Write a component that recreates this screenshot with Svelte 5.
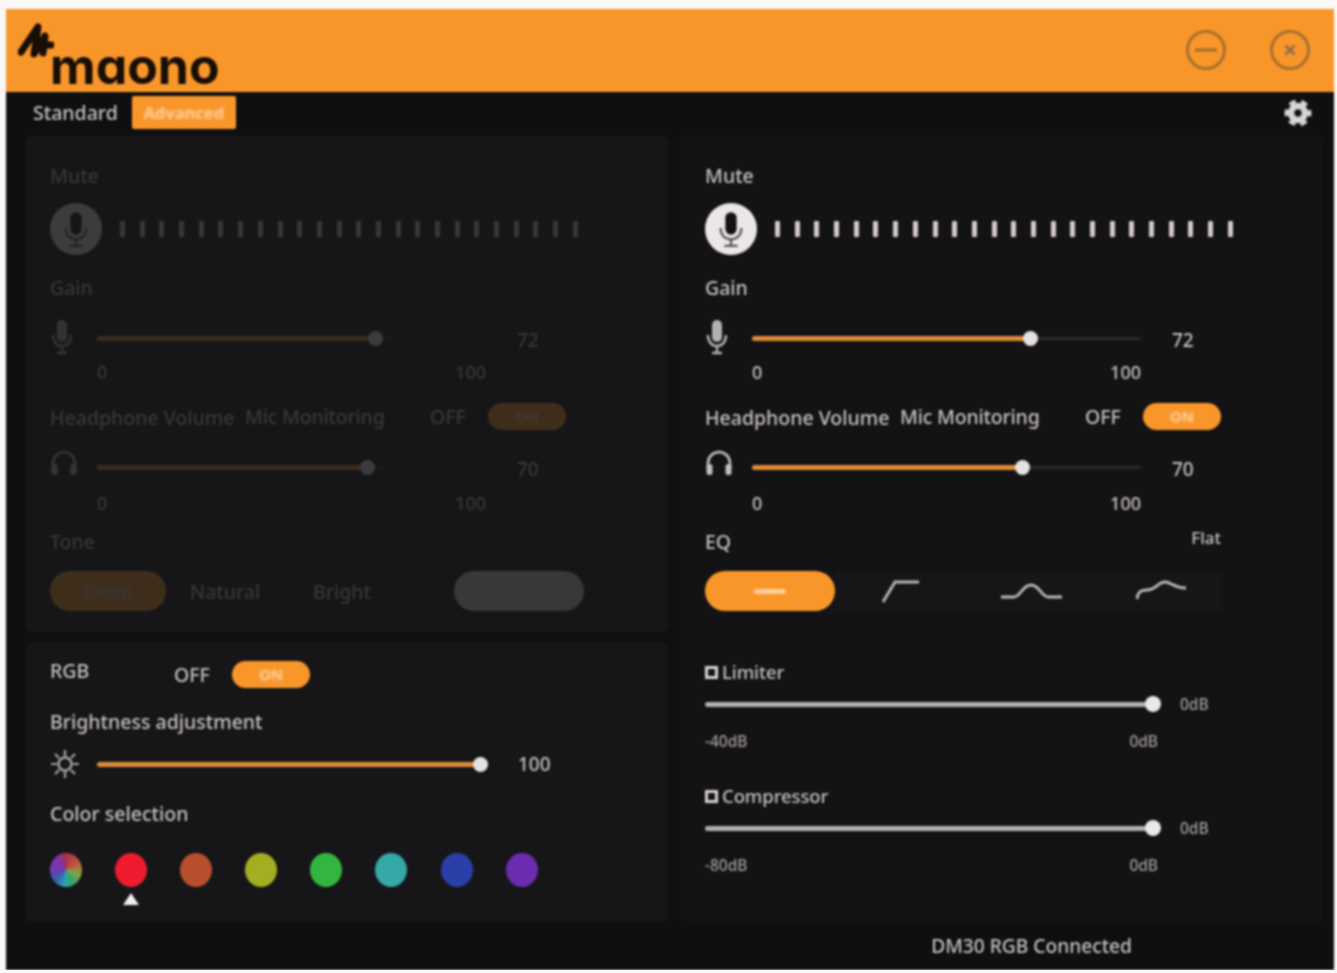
<script lang="ts">
  const ticks = Array.from({ length: 24 });
  const swatches = ['#ee1c2e', '#b84f2c', '#a3ae22', '#33b63f', '#35a8a8', '#2a3fa8', '#6d2bb0'];
</script>

{#snippet micIcon(capsule: string, arc: string)}
  <svg viewBox="0 0 32 40" class="mic-svg" aria-hidden="true">
    <rect x="10" y="2" width="12" height="24" rx="6" fill={capsule} />
    <path d="M5 19c0 8 5 12 11 12s11-4 11-12" fill="none" stroke={arc} stroke-width="2.4" />
    <path d="M16 31v6M9 38h14" fill="none" stroke={arc} stroke-width="2.4" />
  </svg>
{/snippet}

{#snippet slider(pct: number, value: string)}
  <div class="track">
    <div class="fill" style="width: {pct}%"></div>
    <div class="thumb" style="left: {pct}%"></div>
  </div>
  <span class="value">{value}</span>
{/snippet}

{#snippet toggle()}
  <span class="off">OFF</span>
  <span class="pill-toggle"><b>ON</b></span>
{/snippet}

{#snippet micControls()}
  <div class="label first">Mute</div>
  <div class="mute-row">
    <div class="mute-btn">{@render micIcon('#111', '#555')}</div>
    <div class="ticks">
      {#each ticks as _}<i></i>{/each}
    </div>
  </div>

  <div class="label gain">Gain</div>
  <div class="slider-row s1">
    <svg viewBox="0 0 24 36" class="gain-icon" aria-hidden="true">
      <rect x="7" y="1" width="10" height="22" rx="5" fill="#b5b0b0" />
      <path d="M3 16c0 7 4 11 9 11s9-4 9-11" fill="none" stroke="#b5b0b0" stroke-width="2.4" />
      <path d="M12 27v6M7 34h10" stroke="#b5b0b0" stroke-width="2.4" />
    </svg>
    {@render slider(71.5, '72')}
  </div>
  <div class="scale s1"><span>0</span><span>100</span></div>

  <div class="monitor-row">
    <span class="label">Headphone Volume</span>
    <span class="label mic-mon">Mic Monitoring</span>
    {@render toggle()}
  </div>
  <div class="slider-row s2">
    <svg viewBox="0 0 28 26" class="phones" aria-hidden="true">
      <path d="M3 19v-6a11 11 0 0 1 22 0v6" fill="none" stroke="#c4bebe" stroke-width="2.6" />
      <rect x="1.5" y="14" width="6" height="11" rx="2.5" fill="#c4bebe" />
      <rect x="20.5" y="14" width="6" height="11" rx="2.5" fill="#c4bebe" />
    </svg>
    {@render slider(69.5, '70')}
  </div>
  <div class="scale s2"><span>0</span><span>100</span></div>
{/snippet}

{#snippet dbSlider(name: string, min: string)}
  <div class="check-label">
    <span class="box"></span>
    <span class="label">{name}</span>
  </div>
  <div class="db-row">
    <div class="db-track"><div class="db-thumb"></div></div>
    <span class="db-val">0dB</span>
  </div>
  <div class="db-scale"><span>{min}</span><span>0dB</span></div>
{/snippet}

<div class="window">
  <header class="titlebar">
    <div class="logo">
      <svg viewBox="0 0 36 38" class="mark" aria-hidden="true">
        <path d="M3 31 20 6l-4 27L27 15l-2 17M26 24h7" fill="none" stroke="#170e05" stroke-width="7" stroke-linecap="round" stroke-linejoin="round" />
      </svg>
      <span class="wordmark">maono</span>
    </div>
    <div class="win-btns">
      <svg viewBox="0 0 42 42" class="win-btn" aria-hidden="true">
        <circle cx="21" cy="21" r="18.5" fill="none" stroke="#a87030" stroke-width="3" />
        <path d="M10 21h22" stroke="#a87030" stroke-width="3.4" />
      </svg>
      <svg viewBox="0 0 42 42" class="win-btn" aria-hidden="true">
        <circle cx="21" cy="21" r="18.5" fill="none" stroke="#a87030" stroke-width="3" />
        <path d="M16.5 16.5l9 9M25.5 16.5l-9 9" stroke="#94704a" stroke-width="3" />
      </svg>
    </div>
  </header>

  <nav class="tabs">
    <span class="tab">Standard</span>
    <span class="tab active"><b>Advanced</b></span>
    <svg viewBox="0 0 26 26" class="gear" aria-hidden="true">
      <circle cx="13" cy="13" r="9.500" fill="#d8d4d4" />
      <circle cx="13" cy="13" r="10.500" fill="none" stroke="#d8d4d4" stroke-width="4" stroke-dasharray="6 5" stroke-dashoffset="3" />
      <circle cx="13" cy="13" r="3.400" fill="#111113" />
    </svg>
  </nav>

  <main class="columns">
    <div class="col">
      <section class="panel top">
        <div class="dim">
          {@render micControls()}
          <div class="label tone">Tone</div>
          <div class="tone-row">
            <span class="tone-pill">Deep</span>
            <span class="tone-opt natural">Natural</span>
            <span class="tone-opt bright">Bright</span>
            <span class="grey-pill"></span>
          </div>
        </div>
      </section>

      <section class="panel rgb">
        <div class="rgb-row">
          <span class="label rgb-label">RGB</span>
          {@render toggle()}
        </div>
        <div class="label bright-label">Brightness adjustment</div>
        <div class="slider-row s3">
          <svg viewBox="0 0 30 30" class="sun" aria-hidden="true">
            <circle cx="15" cy="15" r="6.500" fill="none" stroke="#aaa5a5" stroke-width="2.400" />
            <path d="M15 1v6M15 23v6M1 15h6M23 15h6M5 5l4 4M21 21l4 4M25 5l-4 4M9 21l-4 4" stroke="#aaa5a5" stroke-width="2.200" />
          </svg>
          {@render slider(100, '100')}
        </div>
        <div class="label color-label">Color selection</div>
        <div class="swatches">
          <span class="swatch wheel"></span>
          {#each swatches as color}
            <span class="swatch" style="background: {color}"></span>
          {/each}
        </div>
        <div class="pointer"></div>
      </section>
    </div>

    <section class="panel right">
      {@render micControls()}
      <div class="eq-head">
        <span class="label">EQ</span>
        <span class="flat">Flat</span>
      </div>
      <div class="eq-row">
        <span class="eq-pill"><i></i></span>
        <div class="eq-strip">
          <svg viewBox="0 0 39 26" class="curve c1" aria-hidden="true">
            <path d="M2 24 14 4h24" />
          </svg>
          <svg viewBox="0 0 63 20" class="curve c2" aria-hidden="true">
            <path d="M1 16h12c8 0 9-12 18-12s10 12 18 12h13" />
          </svg>
          <svg viewBox="0 0 53 22" class="curve c3" aria-hidden="true">
            <path d="M2 20c1-8 5-9 10-9 9 0 11-8 18-8 6 0 9 6 21 6" />
          </svg>
        </div>
      </div>
      <div class="limiter">{@render dbSlider('Limiter', '-40dB')}</div>
      <div class="compressor">{@render dbSlider('Compressor', '-80dB')}</div>
    </section>
  </main>

  <footer class="status">DM30 RGB Connected</footer>
</div>

<style>
  :global(body) {
    margin: 0;
    background: #f8f8f8;
    font-family: "Noto Sans", "Open Sans", sans-serif;
    font-weight: 500;
  }

  .window {
    width: 1328px;
    height: 961px;
    margin: 9px 0 0 6px;
    background: #0f0f11;
    color: #c9c0c1;
    display: flex;
    flex-direction: column;
    filter: blur(0.9px);
    overflow: hidden;
  }

  .titlebar {
    height: 83px;
    flex: none;
    background: #f9962a;
    display: flex;
    justify-content: space-between;
    box-sizing: border-box;
    padding: 0 23px 0 12px;
  }

  .logo {
    display: flex;
    align-items: flex-start;
  }

  .mark {
    width: 36px;
    height: 38px;
    margin-top: 12px;
    flex: none;
  }

  .wordmark {
    font-family: Inter, sans-serif;
    font-feature-settings: "cv11";
    font-weight: 700;
    font-size: 50px;
    line-height: 50px;
    color: #170e05;
    margin: 32px 0 0 -4px;
  }

  .win-btns {
    display: flex;
    gap: 42px;
    margin-top: 20px;
  }

  .win-btn {
    width: 42px;
    height: 42px;
  }

  .tabs {
    height: 44px;
    flex: none;
    display: flex;
    align-items: flex-start;
    box-sizing: border-box;
    padding: 4px 22px 0 27px;
    font-size: 19.500px;
  }

  .tab {
    height: 33px;
    line-height: 33px;
  }

  .tab.active {
    width: 104px;
    margin-left: 14px;
    text-align: center;
    background: #f9962a;
    color: #ffd3a0;
    font-size: 16.500px;
    border-radius: 2px;
  }

  .tab.active b {
    display: block;
    font-weight: 700;
    filter: blur(1.200px);
  }

  .gear {
    width: 28px;
    height: 28px;
    margin: 3px 0 0 auto;
  }

  .columns {
    flex: none;
    height: 786px;
    display: flex;
    gap: 12px;
    padding-left: 20px;
  }

  .col {
    display: flex;
    flex-direction: column;
    gap: 10px;
  }

  .panel {
    width: 642px;
    box-sizing: border-box;
    background: #161618;
    padding-left: 24px;
    border-radius: 6px;
  }

  .panel.top {
    height: 496px;
  }

  .panel.rgb {
    height: 280px;
  }

  .panel.right {
    height: 786px;
    padding-left: 25px;
    background: #131315;
  }

  .dim {
    opacity: 0.18;
  }

  .label {
    height: 24px;
    line-height: 24px;
    font-size: 19.500px;
    white-space: nowrap;
  }

  .first { padding-top: 28px; }
  .gain { margin-top: 21px; }

  .mute-row {
    display: flex;
    align-items: center;
    height: 52px;
    margin-top: 15px;
  }

  .mute-btn {
    width: 52px;
    height: 52px;
    border-radius: 50%;
    background: #ece6e6;
    display: flex;
    align-items: center;
    justify-content: center;
    flex: none;
  }

  .mic-svg {
    width: 30px;
    height: 38px;
  }

  .ticks {
    display: flex;
    gap: 14.700px;
    margin-left: 18px;
  }

  .ticks i {
    width: 5px;
    height: 16px;
    border-radius: 1px;
    background: #d4c9ca;
  }

  .slider-row {
    display: grid;
    grid-template-columns: 47px 389px 31px auto;
    grid-template-rows: 26px;
    align-items: center;
    height: 26px;
  }

  .slider-row.s1 { margin-top: 25px; }
  .slider-row.s2 { margin-top: 22px; }
  .slider-row.s3 {
    margin-top: 17px;
    grid-template-columns: 47px 383px 38px auto;
  }

  .slider-row.s3 .value { margin-top: -1px; }

  .gain-icon {
    width: 24px;
    height: 36px;
    margin-top: -2px;
  }

  .phones {
    width: 28px;
    height: 26px;
    margin-top: -8px;
  }

  .sun {
    width: 30px;
    height: 30px;
  }

  .track {
    grid-column: 2;
    position: relative;
    height: 3px;
    background: #2a2a2c;
    border-radius: 2px;
  }

  .fill {
    height: 5px;
    margin-top: -1px;
    background: #e08a38;
    border-radius: 3px;
  }

  .thumb {
    position: absolute;
    top: -6px;
    width: 15px;
    height: 15px;
    margin-left: -7px;
    border-radius: 50%;
    background: #e6e2e2;
  }

  .value {
    grid-column: 4;
    font-size: 19px;
    line-height: 26px;
    margin-top: 3px;
  }

  .scale {
    width: 389px;
    height: 20px;
    line-height: 20px;
    margin-left: 47px;
    font-size: 18px;
    display: flex;
    justify-content: space-between;
  }

  .scale.s1 { margin-top: 11px; }
  .scale.s2 { margin-top: 13px; }

  .monitor-row {
    display: grid;
    grid-template-columns: 195px 185px 58px 78px;
    align-items: center;
    height: 28px;
    margin-top: 22px;
  }

  .monitor-row .off,
  .monitor-row .pill-toggle {
    margin-top: -4px;
  }

  .mic-mon {
    letter-spacing: -0.200px;
    margin-top: -2px;
  }

  .off {
    font-size: 19.500px;
    line-height: 27px;
  }

  .pill-toggle {
    height: 27px;
    line-height: 27px;
    width: 78px;
    background: #f9962a;
    color: #ffd3a0;
    border-radius: 14px;
    text-align: center;
    font-size: 15px;
  }

  .pill-toggle b {
    display: block;
    font-weight: 700;
    filter: blur(1.200px);
  }

  .tone,
  .eq-head {
    margin-top: 17px;
  }

  .tone-row {
    display: flex;
    align-items: center;
    height: 40px;
    margin-top: 17px;
    font-size: 19.500px;
  }

  .tone-pill {
    width: 116px;
    height: 40px;
    line-height: 40px;
    border-radius: 20px;
    background: #f9962a;
    text-align: center;
  }

  .tone-opt.natural { margin-left: 24px; width: 123px; }
  .tone-opt.bright { width: 141px; }

  .grey-pill {
    width: 130px;
    height: 40px;
    border-radius: 20px;
    background: #d0d0d0;
  }

  .eq-head {
    width: 516px;
    height: 24px;
    display: flex;
    justify-content: space-between;
  }

  .flat {
    font-size: 17px;
    line-height: 18px;
    margin-top: -1px;
  }

  .eq-row {
    display: flex;
    align-items: stretch;
    height: 40px;
    margin-top: 17px;
  }

  .eq-pill {
    width: 130px;
    border-radius: 20px;
    background: #f9962a;
    display: flex;
    align-items: center;
    justify-content: center;
    flex: none;
  }

  .eq-pill i {
    width: 32px;
    height: 5px;
    background: #ffcf98;
    border-radius: 2px;
  }

  .eq-strip {
    width: 387px;
    background: #161618;
    display: flex;
    align-items: center;
  }

  .curve path {
    fill: none;
    stroke: #bdb7b7;
    stroke-width: 2.800;
  }

  .curve.c1 { width: 39px; height: 26px; margin-left: 46px; }
  .curve.c2 { width: 63px; height: 20px; margin-left: 80px; }
  .curve.c3 { width: 53px; height: 22px; margin-left: 72px; margin-top: -3px; }

  .limiter { margin-top: 49px; }
  .compressor { margin-top: 33px; }

  .check-label {
    display: flex;
    align-items: center;
    gap: 4px;
    height: 24px;
  }

  .check-label .label {
    font-size: 18.500px;
    letter-spacing: -0.100px;
  }

  .box {
    width: 7px;
    height: 7px;
    border: 3px solid #d8d0d0;
    flex: none;
  }

  .db-row {
    display: flex;
    align-items: center;
    height: 16px;
    margin-top: 12px;
  }

  .db-track {
    width: 448px;
    height: 5px;
    background: #b5aeae;
    border-radius: 3px;
    display: flex;
    justify-content: flex-end;
    align-items: center;
  }

  .db-thumb {
    width: 16px;
    height: 16px;
    margin-right: -8px;
    flex: none;
    border-radius: 50%;
    background: #ece8e8;
  }

  .db-val {
    margin-left: 27px;
    font-size: 15.500px;
    color: #a89e9f;
  }

  .db-scale {
    width: 453px;
    height: 20px;
    line-height: 20px;
    margin-top: 19px;
    font-size: 15.500px;
    color: #a89e9f;
    display: flex;
    justify-content: space-between;
  }

  .rgb-row {
    display: grid;
    grid-template-columns: 124px 58px 78px;
    align-items: center;
    height: 27px;
    padding-top: 19px;
  }

  .rgb-label { margin-top: -8px; }
  .bright-label { margin-top: 22px; }
  .color-label { margin-top: 25px; }

  .swatches {
    display: flex;
    gap: 33.100px;
    margin-top: 27px;
  }

  .swatch {
    width: 32px;
    height: 34px;
    border-radius: 50%;
    flex: none;
  }

  .wheel {
    background: conic-gradient(#a8324c, #c05a3a 60deg, #7fa84a 110deg, #3ba06a 150deg, #2f9fb0 185deg, #3a5fb0 225deg, #7a35b0 280deg, #7a35b0 320deg, #a8324c);
  }

  .pointer {
    width: 0;
    height: 0;
    margin: 6px 0 0 73px;
    border-left: 8px solid transparent;
    border-right: 8px solid transparent;
    border-bottom: 12px solid #f2f0f0;
  }

  .status {
    flex: 1;
    display: flex;
    align-items: center;
    justify-content: flex-end;
    padding: 0 202px 2px 0;
    font-size: 19.200px;
    background: #0f0f10;
  }
</style>
